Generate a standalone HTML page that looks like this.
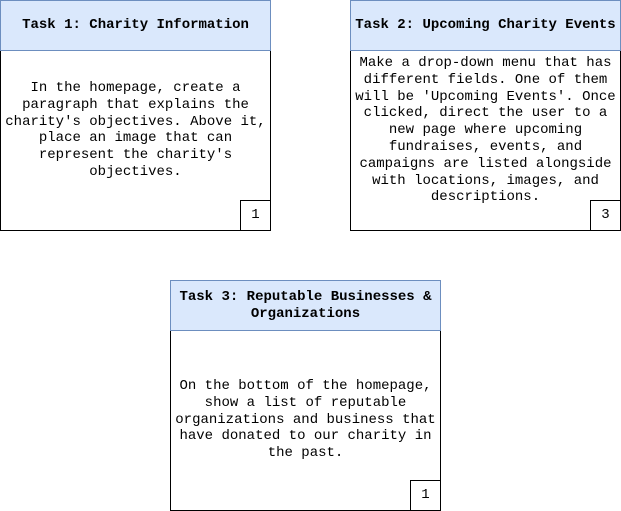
<!DOCTYPE html>
<html><head><style>
body{margin:0;width:621px;height:511px;background:#fff;position:relative;font-family:"Liberation Mono",monospace;color:#000;overflow:hidden}
.card{position:absolute;width:269px;height:229px;border:1px solid #000;background:#fff}
.hd{position:absolute;left:-1px;top:-1px;width:269px;height:49px;border:1px solid #6c8ebf;background:#dae8fc;font-weight:bold;font-size:14px;line-height:16.5px;text-align:center;display:flex;align-items:center;justify-content:center}
.bd{position:absolute;left:0;right:0;font-size:14px;line-height:16.8px;text-align:center;white-space:pre}
.num{position:absolute;right:-1px;bottom:-1px;width:29px;height:29px;border:1px solid #000;font-size:14px;text-align:center;line-height:29px}
</style></head><body>
<div class="card" style="left:0;top:0">
<div class="hd">Task 1: Charity Information</div>
<div class="bd" style="top:79px">In the homepage, create a
paragraph that explains the
charity's objectives. Above it,
place an image that can
represent the charity's
objectives.</div>
<div class="num">1</div>
</div>
<div class="card" style="left:350px;top:0">
<div class="hd">Task 2: Upcoming Charity Events</div>
<div class="bd" style="top:54px">Make a drop-down menu that has
different fields. One of them
will be 'Upcoming Events'. Once
clicked, direct the user to a
new page where upcoming
fundraises, events, and
campaigns are listed alongside
with locations, images, and
descriptions.</div>
<div class="num">3</div>
</div>
<div class="card" style="left:170px;top:280px">
<div class="hd">Task 3: Reputable Businesses &amp;<br>Organizations</div>
<div class="bd" style="top:97px">On the bottom of the homepage,
show a list of reputable
organizations and business that
have donated to our charity in
the past.</div>
<div class="num">1</div>
</div>
</body></html>
